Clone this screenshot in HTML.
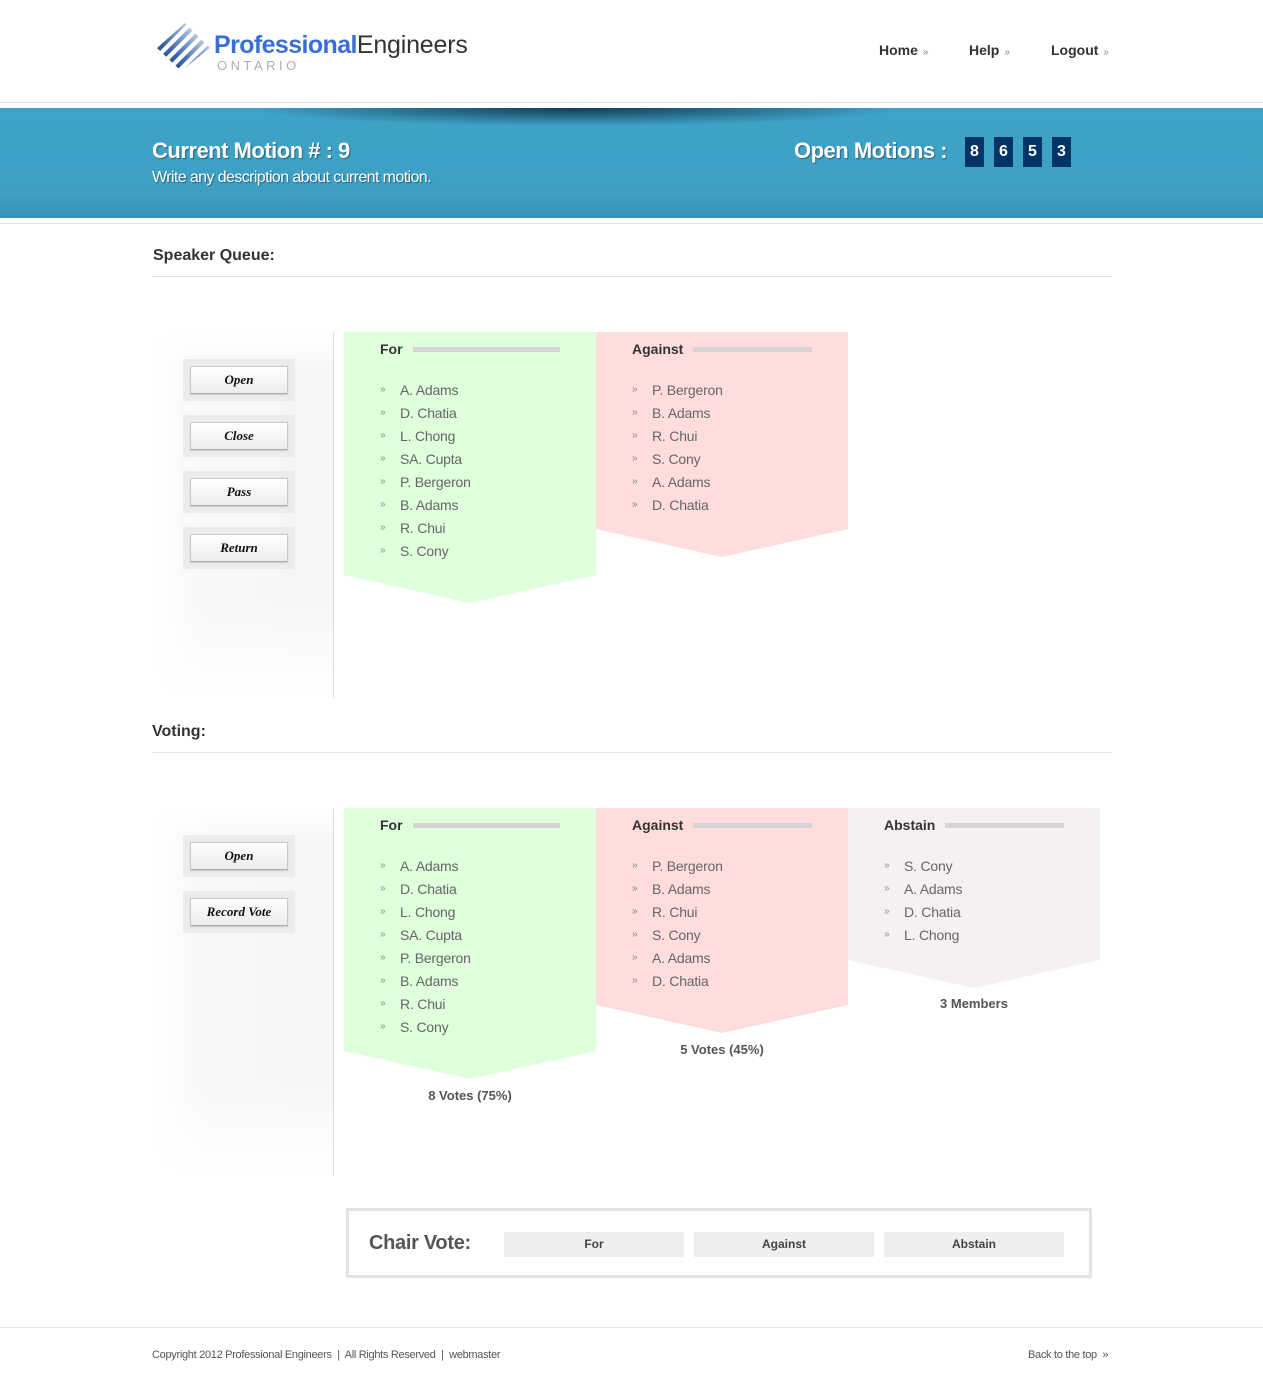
<!DOCTYPE html>
<html><head><meta charset="utf-8">
<style>
*{margin:0;padding:0;box-sizing:border-box}
body{width:1263px;height:1398px;position:relative;background:#fff;font-family:"Liberation Sans",Arial,sans-serif;overflow:hidden}
.a{position:absolute}
.nav{font-size:14px;font-weight:bold;color:#333;top:42px}
.nav span{font-size:10px;color:#888;font-weight:normal;margin-left:5px}
.banner{left:0;top:108px;width:1263px;height:110px;background:linear-gradient(#3fa3c8,#3d9fc4 80%,#3890b5)}
.shadow{left:250px;top:108px;width:650px;height:18px;background:radial-gradient(ellipse 50% 100% at 50% 0,rgba(10,40,60,.85),rgba(10,40,60,0) 100%)}
.num{top:137px;width:19px;height:30px;background:#003366;color:#fff;font-weight:bold;font-size:16px;text-align:center;line-height:30px}
h2{position:absolute;font-size:16px;font-weight:bold;color:#333}
.hr{position:absolute;left:152px;width:960px;height:1px;background:#e2e2e2}
.panel{left:152px;width:182px;border-right:1px solid #ddd;background:linear-gradient(90deg,rgba(255,255,255,1) 0%,rgba(243,244,245,.7) 30%,rgba(245,246,247,1) 100%)}
.panel:after{content:"";position:absolute;left:0;right:0;bottom:0;height:100px;background:linear-gradient(rgba(255,255,255,0),#fff)}
.panel:before{content:"";position:absolute;left:0;right:0;top:0;height:40px;background:linear-gradient(#fff,rgba(255,255,255,0))}
.btnw{left:183px;width:112px;height:42px;background:#ececec;z-index:2}
.btn{position:absolute;left:7px;top:7px;width:98px;height:28px;background:linear-gradient(#fff,#ececec);border:1px solid #c8c8c8;border-bottom-color:#aaa;font-family:"Liberation Serif",serif;font-style:italic;font-weight:bold;font-size:13px;text-align:center;line-height:26px;color:#111;box-shadow:0 1px 1px rgba(0,0,0,.15)}
.col{position:absolute;width:252px}
.col .t{position:absolute;left:36px;top:8px;width:180px;display:flex;align-items:center;font-size:14px;font-weight:bold;color:#333;height:18px}
.col .bar{flex:1;margin-left:10px;height:5px;background:#d8d4d6;margin-top:1px}
.col ul{position:absolute;left:36px;top:48px;list-style:none}
.col li{height:23px;line-height:20px;font-size:14px;color:#666;letter-spacing:-0.2px}
.col li b{font-weight:normal;font-size:10px;color:#888;display:inline-block;width:20px;vertical-align:top;line-height:20px}
.g{background:#dfffdd}.r{background:#ffdddd}.s{background:#f5f1f1}
.cap{position:absolute;font-size:13px;font-weight:bold;color:#555;text-align:center;width:252px}
.cv{left:346px;top:1208px;width:746px;height:70px;border:3px solid #e3e3e3}
.cvb{top:1231px;width:180px;height:25px;background:#eee;font-size:12px;font-weight:bold;color:#444;text-align:center;line-height:25px}
.ft{font-size:11px;color:#555;top:1349px;letter-spacing:-0.3px}
</style></head><body>

<svg class="a" style="left:155px;top:23px" width="58" height="50" viewBox="0 0 58 50">
<defs><clipPath id="d"><polygon points="30,0 56,24 26,48 2,25"/></clipPath>
<linearGradient id="lg" x1="0" y1="1" x2="1" y2="0"><stop offset="0" stop-color="#0d2f5e"/><stop offset=".5" stop-color="#3a68a8"/><stop offset="1" stop-color="#b8c8e0"/></linearGradient></defs>
<g clip-path="url(#d)" stroke="url(#lg)" stroke-width="4.2">
<line x1="-10" y1="40" x2="30" y2="0"/><line x1="-4" y1="46" x2="36" y2="6"/><line x1="2" y1="52" x2="42" y2="12"/><line x1="8" y1="58" x2="48" y2="18"/><line x1="14" y1="64" x2="54" y2="24"/><line x1="20" y1="70" x2="60" y2="30"/></g></svg>
<div class="a" style="left:214px;top:31px;font-size:25px;font-weight:bold;color:#3a6fd6;letter-spacing:-0.6px">Professional<span style="color:#333;font-weight:normal;letter-spacing:-0.2px">Engineers</span></div>
<div class="a" style="left:217px;top:58px;font-size:13px;letter-spacing:3.5px;color:#b8a8a8">ONTARIO</div>

<div class="a nav" style="left:879px">Home<span>»</span></div>
<div class="a nav" style="left:969px">Help<span>»</span></div>
<div class="a nav" style="left:1051px">Logout<span>»</span></div>

<div class="a" style="left:0;top:102px;width:1263px;height:1px;background:#e2e2e2"></div>
<div class="a banner"></div>
<div class="a shadow"></div>
<div class="a" style="left:0;top:223px;width:1263px;height:1px;background:#e2e2e2"></div>
<div class="a" style="left:152px;top:138px;font-size:22px;font-weight:bold;color:#fff;letter-spacing:-0.5px;text-shadow:1px 1px 1px rgba(0,0,0,.4)">Current Motion # : 9</div>
<div class="a" style="left:152px;top:169px;font-size:16px;color:#fff;letter-spacing:-0.6px;text-shadow:1px 1px 1px rgba(0,0,0,.4)">Write any description about current motion.</div>
<div class="a" style="left:794px;top:138px;font-size:22px;font-weight:bold;color:#fff;letter-spacing:-0.5px;text-shadow:1px 1px 1px rgba(0,0,0,.4)">Open Motions :</div>
<div class="a num" style="left:965px">8</div><div class="a num" style="left:994px">6</div><div class="a num" style="left:1023px">5</div><div class="a num" style="left:1052px">3</div>

<h2 style="left:153px;top:247px">Speaker Queue:</h2>
<div class="hr" style="top:276px"></div>

<div class="a panel" style="top:332px;height:366px"></div>
<div class="a btnw" style="top:359px"><div class="btn">Open</div></div>
<div class="a btnw" style="top:415px"><div class="btn">Close</div></div>
<div class="a btnw" style="top:471px"><div class="btn">Pass</div></div>
<div class="a btnw" style="top:527px"><div class="btn">Return</div></div>

<div class="col g" style="left:344px;top:332px;height:271px;clip-path:polygon(0 0,100% 0,100% 243px,50% 100%,0 243px)">
<div class="t">For<div class="bar"></div></div>
<ul><li><b>»</b>A. Adams</li><li><b>»</b>D. Chatia</li><li><b>»</b>L. Chong</li><li><b>»</b>SA. Cupta</li><li><b>»</b>P. Bergeron</li><li><b>»</b>B. Adams</li><li><b>»</b>R. Chui</li><li><b>»</b>S. Cony</li></ul></div>
<div class="col r" style="left:596px;top:332px;height:225px;clip-path:polygon(0 0,100% 0,100% 197px,50% 100%,0 197px)">
<div class="t">Against<div class="bar"></div></div>
<ul><li><b>»</b>P. Bergeron</li><li><b>»</b>B. Adams</li><li><b>»</b>R. Chui</li><li><b>»</b>S. Cony</li><li><b>»</b>A. Adams</li><li><b>»</b>D. Chatia</li></ul></div>

<h2 style="left:152px;top:723px">Voting:</h2>
<div class="hr" style="top:752px"></div>

<div class="a panel" style="top:808px;height:368px"></div>
<div class="a btnw" style="top:835px"><div class="btn">Open</div></div>
<div class="a btnw" style="top:891px"><div class="btn">Record Vote</div></div>

<div class="col g" style="left:344px;top:808px;height:271px;clip-path:polygon(0 0,100% 0,100% 243px,50% 100%,0 243px)">
<div class="t">For<div class="bar"></div></div>
<ul><li><b>»</b>A. Adams</li><li><b>»</b>D. Chatia</li><li><b>»</b>L. Chong</li><li><b>»</b>SA. Cupta</li><li><b>»</b>P. Bergeron</li><li><b>»</b>B. Adams</li><li><b>»</b>R. Chui</li><li><b>»</b>S. Cony</li></ul></div>
<div class="col r" style="left:596px;top:808px;height:225px;clip-path:polygon(0 0,100% 0,100% 197px,50% 100%,0 197px)">
<div class="t">Against<div class="bar"></div></div>
<ul><li><b>»</b>P. Bergeron</li><li><b>»</b>B. Adams</li><li><b>»</b>R. Chui</li><li><b>»</b>S. Cony</li><li><b>»</b>A. Adams</li><li><b>»</b>D. Chatia</li></ul></div>
<div class="col s" style="left:848px;top:808px;height:180px;clip-path:polygon(0 0,100% 0,100% 152px,50% 100%,0 152px)">
<div class="t">Abstain<div class="bar"></div></div>
<ul><li><b>»</b>S. Cony</li><li><b>»</b>A. Adams</li><li><b>»</b>D. Chatia</li><li><b>»</b>L. Chong</li></ul></div>
<div class="cap" style="left:344px;top:1088px">8 Votes (75%)</div>
<div class="cap" style="left:596px;top:1042px">5 Votes (45%)</div>
<div class="cap" style="left:848px;top:996px">3 Members</div>

<div class="a cv"></div>
<div class="a" style="left:369px;top:1232px;font-size:20px;font-weight:bold;color:#555;letter-spacing:-0.3px">Chair Vote:</div>
<div class="a cvb" style="left:504px;top:1232px">For</div>
<div class="a cvb" style="left:694px;top:1232px">Against</div>
<div class="a cvb" style="left:884px;top:1232px">Abstain</div>

<div class="a" style="left:0;top:1327px;width:1263px;height:1px;background:#e2e2e2"></div>
<div class="a ft" style="left:152px">Copyright 2012 Professional Engineers &nbsp;|&nbsp; All Rights Reserved &nbsp;|&nbsp; webmaster</div>
<div class="a ft" style="left:1028px">Back to the top &nbsp;»</div>
</body></html>
